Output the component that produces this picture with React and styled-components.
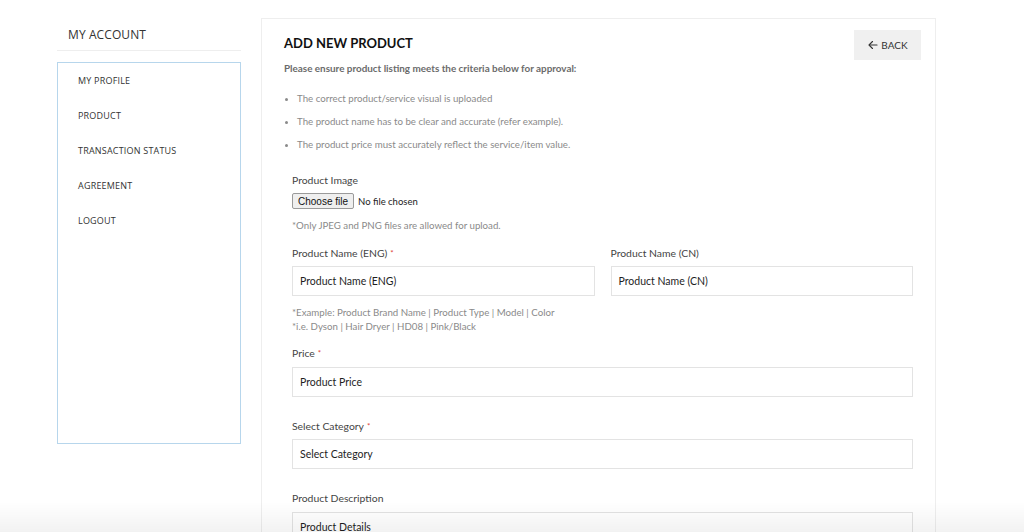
import React from 'react'
import styled, { createGlobalStyle } from 'styled-components'

const GlobalStyle = createGlobalStyle`
  * { box-sizing: border-box; }
  body {
    margin: 0;
    background: #fff;
    font-family: Lato, "Open Sans", sans-serif;
    color: #333;
  }
`

const Page = styled.div`
  display: flex;
  align-items: flex-start;
  gap: 20px;
  padding: 18px 0 0 57px;
  height: 532px;
  overflow: hidden;
`

const Sidebar = styled.aside`
  width: 184px;
  flex-shrink: 0;
`

const SideTitle = styled.h3`
  margin: 0;
  padding: 8px 0 7px 11px;
  font-family: "Open Sans", sans-serif;
  font-weight: 400;
  font-size: 12px;
  letter-spacing: 0.1px;
  color: #333;
  border-bottom: 1px solid #eeeeee;
`

const Menu = styled.ul`
  list-style: none;
  margin: 11px 0 0;
  padding: 11px 0 0 20px;
  height: 382px;
  border: 1px solid #b7d6ec;
`

const MenuItem = styled.li`
  height: 35px;
  font-family: "Open Sans", sans-serif;
  font-size: 9px;
  letter-spacing: 0.2px;
  color: #333;
`

const Card = styled.main`
  width: 675px;
  flex-shrink: 0;
  min-height: 600px;
  border: 1px solid #eeeeee;
  padding: 11px 14px 0 22px;
`

const Header = styled.div`
  display: flex;
  justify-content: space-between;
  align-items: flex-start;
`

const Title = styled.h1`
  margin: 5px 0 0;
  font-size: 13px;
  font-weight: 700;
  color: #111;
`

const BackButton = styled.button`
  display: flex;
  align-items: center;
  justify-content: center;
  gap: 2px;
  width: 67px;
  height: 30px;
  border: none;
  background: #f0f0f0;
  font-family: Lato, sans-serif;
  font-size: 10px;
  color: #333;
`

const Intro = styled.p`
  margin: 2px 0 0;
  font-size: 9.9px;
  font-weight: 700;
  color: #6b6b6b;
`

const Criteria = styled.ul`
  margin: 18px 0 0;
  padding: 0 0 0 13px;
  font-size: 9.7px;
  color: #8a8a8a;

  li {
    height: 23px;
    line-height: 12px;
  }
  li::marker {
    font-size: 8px;
  }
`

const Form = styled.form`
  padding: 13px 8px 0 8px;
`

const Field = styled.div`
  margin-bottom: ${p => p.$mb ?? 15}px;
`

const Row = styled.div`
  display: grid;
  grid-template-columns: 1fr 1fr;
  gap: 16px;
`

const Label = styled.label`
  display: block;
  font-size: 10.4px;
  color: #444;
  line-height: 12px;
  margin-bottom: ${p => p.$mb ?? 8}px;
`

const Req = styled.span`
  color: #e0443a;
  font-size: 8px;
  vertical-align: top;
  margin-left: 3px;
`

const TextInput = styled.div`
  height: 30px;
  border: 1px solid #e3e3e3;
  padding: 0 7px;
  display: flex;
  align-items: center;
  font-size: 10.5px;
  color: #1e1e1e;
  background: #fff;
`

const FileRow = styled.div`
  display: flex;
  align-items: center;
  gap: 4px;
  font-size: 9.5px;
  color: #222;
`

const FileButton = styled.span`
  display: inline-flex;
  align-items: center;
  height: 16px;
  padding: 0 5px;
  border: 1px solid #9a9a9a;
  border-radius: 2px;
  background: #efefef;
  font-family: "Liberation Sans", Arial, sans-serif;
  font-size: 10px;
  color: #111;
`

const Hint = styled.p`
  margin: ${p => p.$mt ?? 0}px 0 0;
  font-size: 9.7px;
  line-height: 14px;
  color: #8a8a8a;
`

const BottomFade = styled.div`
  position: fixed;
  left: 0;
  right: 0;
  bottom: 0;
  height: 30px;
  background: linear-gradient(to bottom, rgba(0, 0, 0, 0), rgba(0, 0, 0, 0.05));
  pointer-events: none;
`

const ArrowLeft = () => (
  <svg width="12" height="12" viewBox="0 0 24 24" fill="none" stroke="#333" strokeWidth="2.2" strokeLinecap="round" strokeLinejoin="round">
    <path d="M20 12H5" />
    <path d="M11 19l-7-7 7-7" />
  </svg>
)

const menu = ['MY PROFILE', 'PRODUCT', 'TRANSACTION STATUS', 'AGREEMENT', 'LOGOUT']

const criteria = [
  'The correct product/service visual is uploaded',
  'The product name has to be clear and accurate (refer example).',
  'The product price must accurately reflect the service/item value.',
]

export default function App() {
  return (
    <>
      <GlobalStyle />
      <Page>
        <Sidebar>
          <SideTitle>MY ACCOUNT</SideTitle>
          <Menu>
            {menu.map(m => <MenuItem key={m}>{m}</MenuItem>)}
          </Menu>
        </Sidebar>

        <Card>
          <Header>
            <Title>ADD NEW PRODUCT</Title>
            <BackButton><ArrowLeft />BACK</BackButton>
          </Header>
          <Intro>Please ensure product listing meets the criteria below for approval:</Intro>
          <Criteria>
            {criteria.map(c => <li key={c}>{c}</li>)}
          </Criteria>

          <Form>
            <Field $mb={15}>
              <Label $mb={7}>Product Image</Label>
              <FileRow>
                <FileButton>Choose file</FileButton>
                No file chosen
              </FileRow>
              <Hint $mt={9}>*Only JPEG and PNG files are allowed for upload.</Hint>
            </Field>

            <Field $mb={14}>
              <Row>
                <div>
                  <Label $mb={7}>Product Name (ENG)<Req>*</Req></Label>
                  <TextInput>Product Name (ENG)</TextInput>
                </div>
                <div>
                  <Label $mb={7}>Product Name (CN)</Label>
                  <TextInput>Product Name (CN)</TextInput>
                </div>
              </Row>
              <Hint $mt={9}>*Example: Product Brand Name | Product Type | Model | Color<br />*i.e. Dyson | Hair Dryer | HD08 | Pink/Black</Hint>
            </Field>

            <Field $mb={23}>
              <Label>Price<Req>*</Req></Label>
              <TextInput>Product Price</TextInput>
            </Field>

            <Field $mb={23}>
              <Label $mb={7}>Select Category<Req>*</Req></Label>
              <TextInput>Select Category</TextInput>
            </Field>

            <Field>
              <Label>Product Description</Label>
              <TextInput>Product Details</TextInput>
            </Field>
          </Form>
        </Card>
      </Page>
      <BottomFade />
    </>
  )
}
